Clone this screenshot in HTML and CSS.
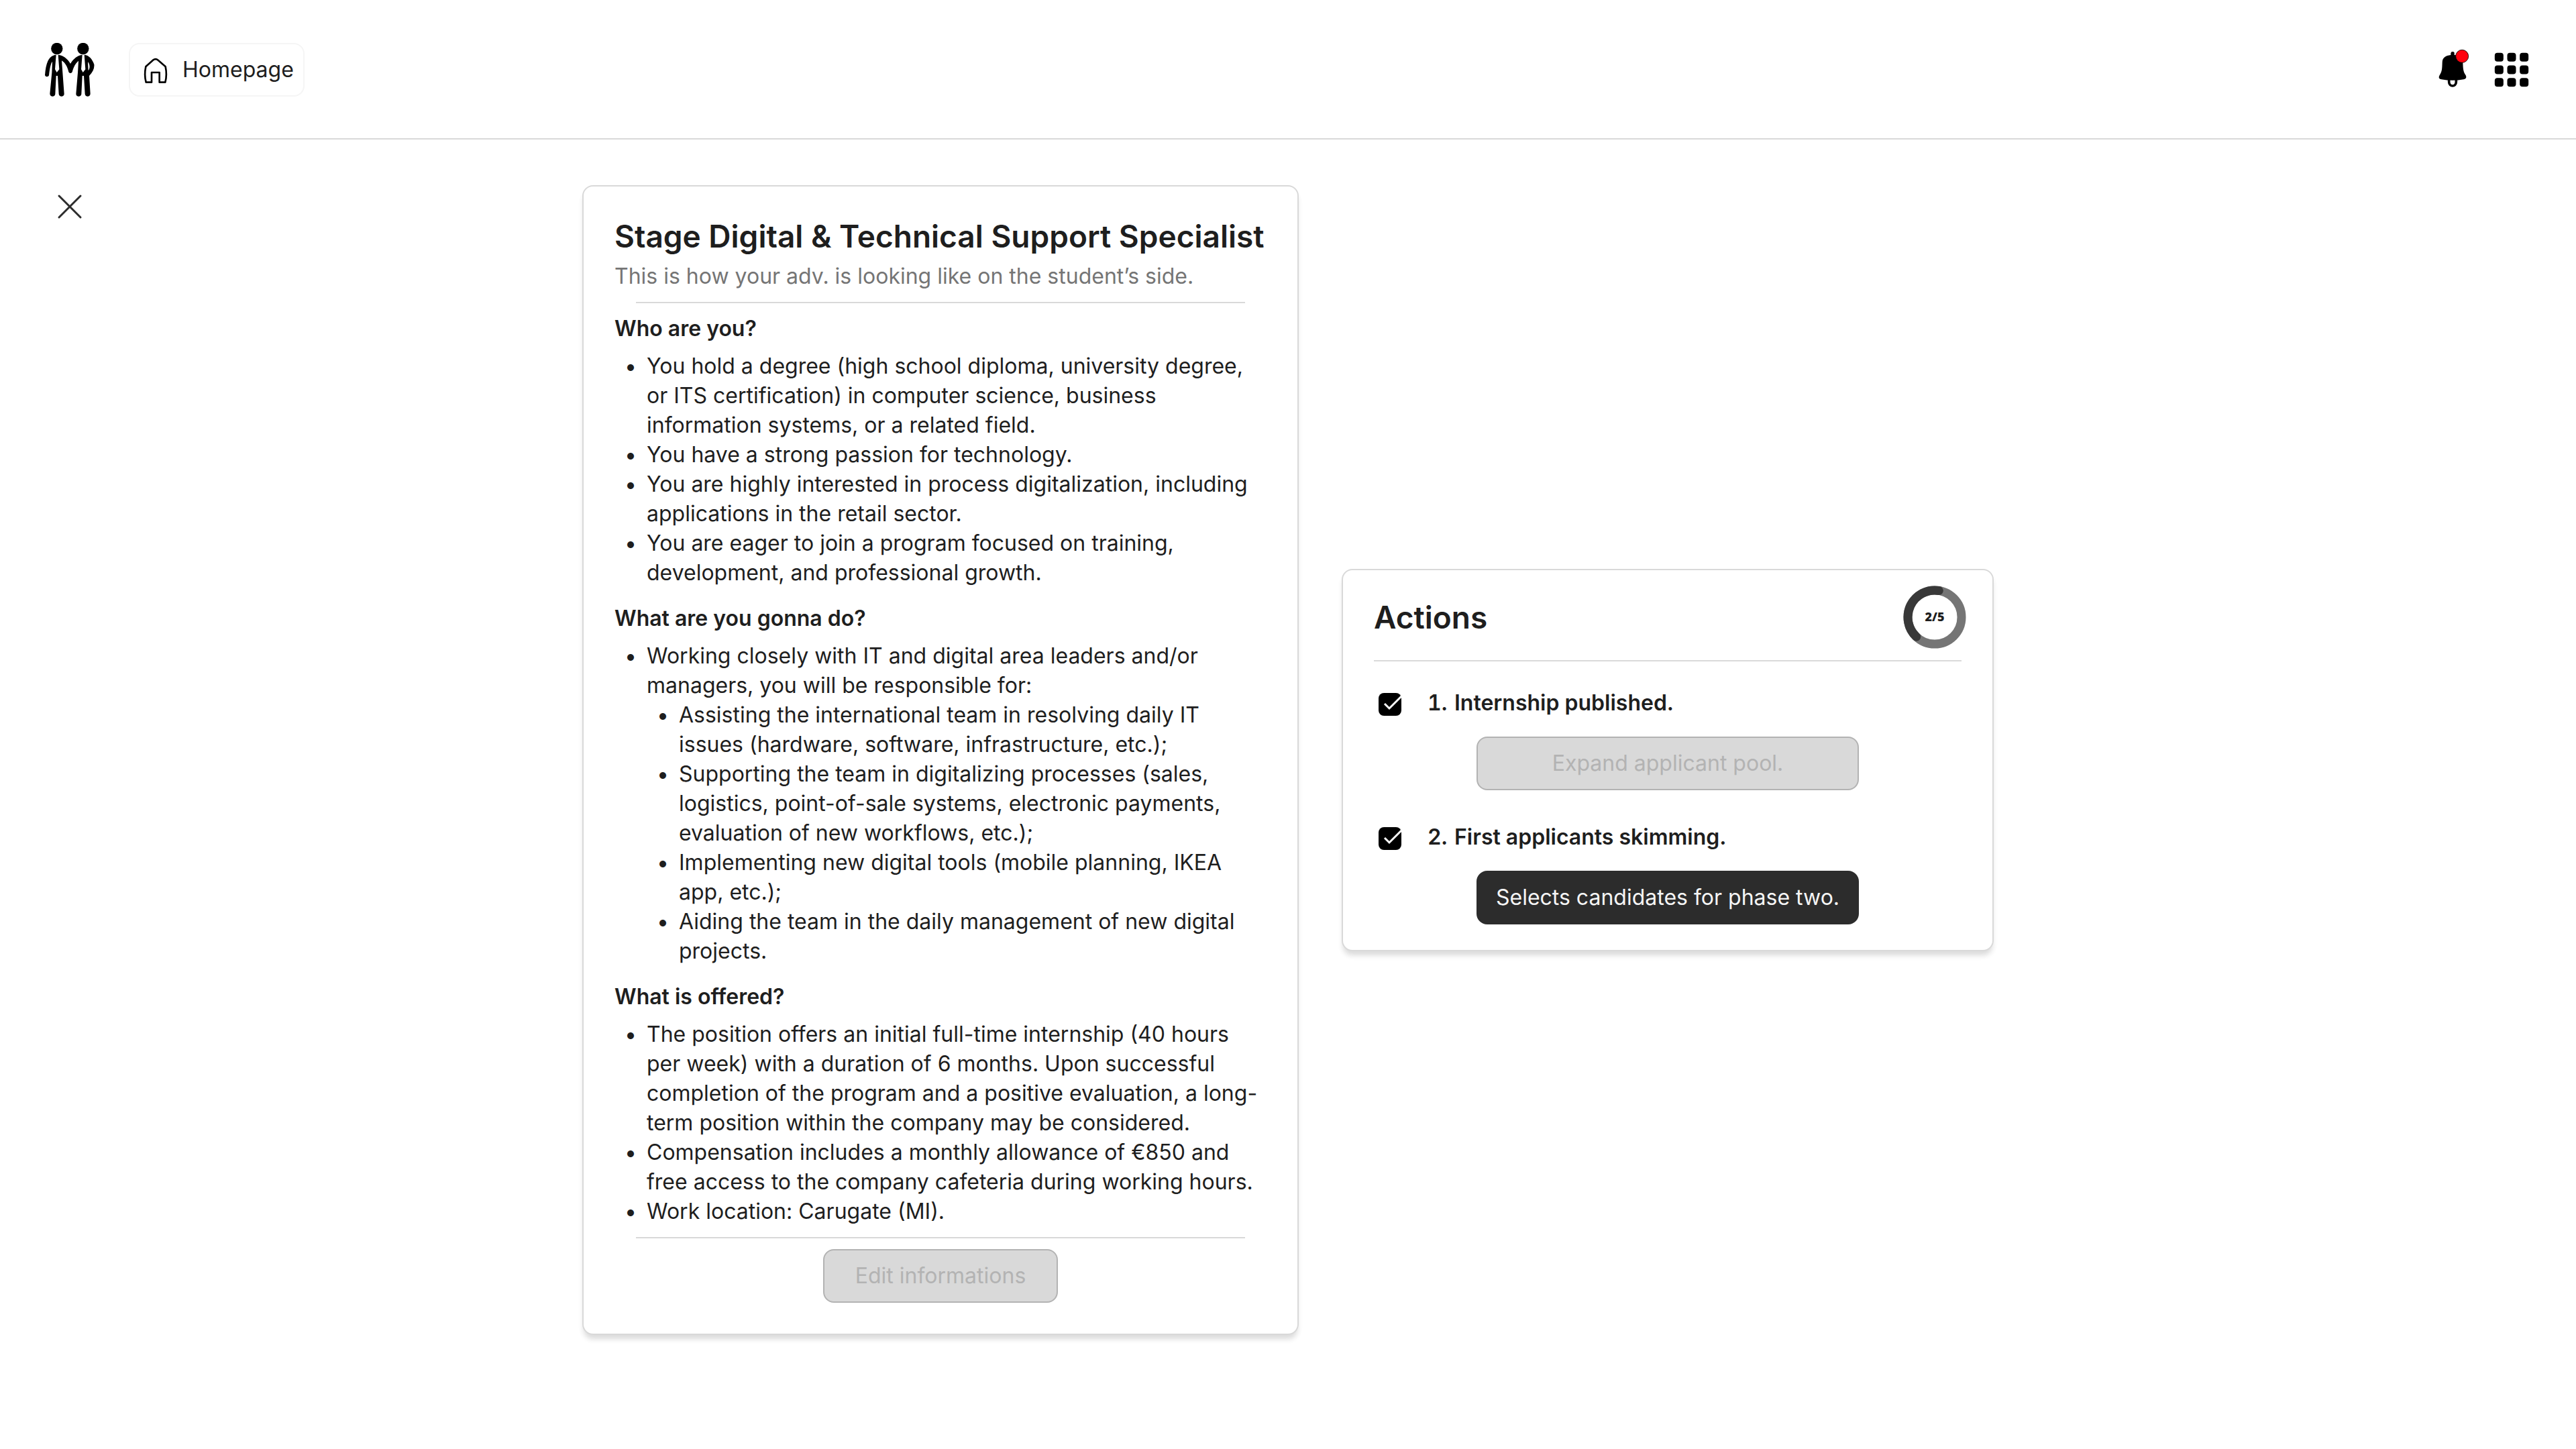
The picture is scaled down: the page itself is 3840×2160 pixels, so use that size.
FILE: index.html
```html
<!DOCTYPE html>
<html lang="en">
<head>
  <meta charset="utf-8">
  <meta name="viewport" content="width=device-width, initial-scale=1">
  <title>Stage Digital &amp; Technical Support Specialist</title>
  <link rel="stylesheet" href="styles.css">
</head>
<body>
  <header class="topbar">
    <a class="logo" href="#" aria-label="Home">
      <svg viewBox="72 72 240 240" aria-hidden="true">
        <circle cx="134.500" cy="97.500" r="26"/>
        <circle cx="251.500" cy="97.500" r="26"/>
        <path d="M131 125 L126 190 L134 204 L145 190 L140 125 C162 127 182 142 195 165 C208 142 228 127 248 125 L243 190 L251 204 L262 190 L257 125 C278 127 292 143 301 168 C303 186 295 203 279 219 L284 299 C284 315 261 315 260 301 L255 219 L248 219 L244 301 C243 315 220 315 220 300 L228 205 L231 152 C218 163 210 177 203 202 C200 209 190 209 187 202 C181 178 173 162 156 151 L160 205 L167 300 C167 315 144 315 143 301 L138 219 L131 219 L127 301 C126 315 103 315 103 299 L112 205 L114 155 C106 165 102 190 99 217 C97 225 83 225 81 216 C83 190 87 168 94 153 C103 136 113 127 131 125 Z M273 157 L275 196 C283 186 283 168 273 157 Z" fill-rule="evenodd"/>
      </svg>
    </a>
    <a class="home-link" href="#">
      <svg class="home-icon" viewBox="504 120 144 144" aria-hidden="true">
        <path d="M558 248 V204 H593 V248 H619 C625 226 625 202 620 178 L587 149 Q576 140 564 149 L532 178 C527 202 527 226 533 248 Z"/>
      </svg>
      <span>Homepage</span>
    </a>
    <div class="topbar-actions">
      <button class="icon-button" type="button" aria-label="Notifications">
        <svg viewBox="132 96 192 192" aria-hidden="true">
          <path d="M220 126 V118 Q221 111 228 111 Q236 111 236 118 V126 C260 128 274 137 274 160 C275 190 276 201 287 217 C292 228 287 233 278 235 Q228 244 178 235 C169 233 164 228 169 218 C181 201 181 190 182 160 C182 138 197 128 220 126 Z"/>
          <path d="M212 236 V246 C212 270 244 270 244 246 V236" fill="none" stroke="#000" stroke-width="11"/>
          <circle cx="270.500" cy="131.500" r="28.500" fill="#ff000d" stroke="#000" stroke-width="2.500"/>
        </svg>
      </button>
      <button class="icon-button" type="button" aria-label="Menu">
        <svg viewBox="396 96 192 192" aria-hidden="true">
          <rect x="416.500" y="116.500" width="39" height="39" rx="12"/>
          <rect x="472.500" y="116.500" width="39" height="39" rx="12"/>
          <rect x="528.500" y="116.500" width="39" height="39" rx="12"/>
          <rect x="416.500" y="172.500" width="39" height="39" rx="12"/>
          <rect x="472.500" y="172.500" width="39" height="39" rx="12"/>
          <rect x="528.500" y="172.500" width="39" height="39" rx="12"/>
          <rect x="416.500" y="228.500" width="39" height="39" rx="12"/>
          <rect x="472.500" y="228.500" width="39" height="39" rx="12"/>
          <rect x="528.500" y="228.500" width="39" height="39" rx="12"/>
        </svg>
      </button>
    </div>
  </header>

  <main class="page">
    <button class="close-button" type="button" aria-label="Close">
      <svg viewBox="0 0 80 80" aria-hidden="true"><path d="M24 24 L56 56 M56 24 L24 56"/></svg>
    </button>

    <div class="cards">
      <article class="card advert">
        <div class="advert-head">
          <h1 class="title">Stage Digital &amp; Technical Support Specialist</h1>
          <p class="subtitle">This is how your adv. is looking like on the student’s side.</p>
        </div>
        <hr class="divider divider-inset">
        <div class="sections">
          <section class="section">
            <h2 class="section-title">Who are you?</h2>
            <ul class="bullets">
              <li>You hold a degree (high school diploma, university degree, or ITS certification) in computer science, business information systems, or a related field.</li>
              <li>You have a strong passion for technology.</li>
              <li>You are highly interested in process digitalization, including applications in the retail sector.</li>
              <li>You are eager to join a program focused on training, development, and professional growth.</li>
            </ul>
          </section>
          <section class="section">
            <h2 class="section-title">What are you gonna do?</h2>
            <ul class="bullets">
              <li>Working closely with IT and digital area leaders and/or managers, you will be responsible for:
                <ul class="bullets">
                  <li>Assisting the international team in resolving daily IT issues (hardware, software, infrastructure, etc.);</li>
                  <li>Supporting the team in digitalizing processes (sales, logistics, point-of-sale systems, electronic payments, evaluation of new workflows, etc.);</li>
                  <li>Implementing new digital tools (mobile planning, IKEA app, etc.);</li>
                  <li>Aiding the team in the daily management of new digital projects.</li>
                </ul>
              </li>
            </ul>
          </section>
          <section class="section">
            <h2 class="section-title">What is offered?</h2>
            <ul class="bullets">
              <li>The position offers an initial full-time internship (40 hours per week) with a duration of 6 months. Upon successful completion of the program and a positive evaluation, a long-term position within the company may be considered.</li>
              <li>Compensation includes a monthly allowance of €850 and free access to the company cafeteria during working hours.</li>
              <li>Work location: Carugate (MI).</li>
            </ul>
          </section>
        </div>
        <hr class="divider divider-inset">
        <button class="button button-disabled" type="button" disabled>Edit informations</button>
      </article>

      <section class="card actions">
        <div class="actions-head">
          <h2 class="title">Actions</h2>
          <svg class="progress" viewBox="0 0 96 96" role="img" aria-label="2 of 5 done">
            <circle cx="48" cy="48" r="40" stroke="#757575"/>
            <path d="M20.700 77.200 A40 40 0 0 1 54.300 8.500" stroke="#383838" stroke-linecap="round"/>
            <text x="48" y="54">2/5</text>
          </svg>
        </div>
        <hr class="divider">
        <ol class="steps">
          <li class="step">
            <label class="step-label">
              <span class="tick">
                <input type="checkbox" checked>
                <svg viewBox="0 0 48 48" aria-hidden="true"><path d="M16 23 L23 30 L41 12"/></svg>
              </span>
              <span class="step-text"><span class="step-number">1.</span><span>Internship published.</span></span>
            </label>
            <button class="button button-wide button-disabled" type="button" disabled>Expand applicant pool.</button>
          </li>
          <li class="step">
            <label class="step-label">
              <span class="tick">
                <input type="checkbox" checked>
                <svg viewBox="0 0 48 48" aria-hidden="true"><path d="M16 23 L23 30 L41 12"/></svg>
              </span>
              <span class="step-text"><span class="step-number">2.</span><span>First applicants skimming.</span></span>
            </label>
            <button class="button button-wide" type="button">Selects candidates for phase two.</button>
          </li>
        </ol>
      </section>
    </div>
  </main>
</body>
</html>
```
FILE: styles.css
```css
* {
  box-sizing: border-box;
}

body {
  margin: 0;
  background: #fff;
  color: #1e1e1e;
  font: 400 32px/44px Inter, "Liberation Sans", sans-serif;
}

h1, h2, p, ul, ol {
  margin: 0;
  padding: 0;
}

button {
  font: inherit;
  cursor: pointer;
}

svg {
  display: block;
}

/* Top bar */
.topbar {
  display: flex;
  align-items: center;
  gap: 48px;
  padding: 64px 64px 62px;
  border-bottom: 2px solid #d9d9d9;
}

.logo,
.logo svg {
  display: block;
  width: 80px;
  height: 80px;
}

.home-link {
  display: flex;
  align-items: center;
  gap: 16px;
  height: 80px;
  padding: 0 14px;
  border: 2px solid #f5f5f5;
  border-radius: 16px;
  color: inherit;
  text-decoration: none;
}

.home-icon {
  width: 48px;
  height: 48px;
  fill: none;
  stroke: #000;
  stroke-width: 8;
  stroke-linejoin: round;
}

.topbar-actions {
  display: flex;
  gap: 24px;
  margin-left: auto;
}

.icon-button,
.close-button {
  padding: 0;
  border: 0;
  background: none;
}

.icon-button svg {
  width: 64px;
  height: 64px;
}

/* Page */
.page {
  display: grid;
  grid-template-columns: 1fr auto 1fr;
  align-items: start;
  padding: 60px 64px;
}

.close-button {
  justify-self: start;
}

.close-button svg {
  width: 80px;
  height: 80px;
  fill: none;
  stroke: #2c2c2c;
  stroke-width: 3;
  stroke-linecap: round;
}

.cards {
  display: flex;
  align-items: center;
  gap: 64px;
  padding-top: 8px;
}

.card {
  display: flex;
  flex-direction: column;
  gap: 16px;
  border: 2px solid #d9d9d9;
  border-radius: 16px;
  background: #fff;
  box-shadow: 0 8px 8px -2px #0c0c0d1a, 0 8px 8px -2px #0c0c0d0d;
}

.title {
  font-size: 46px;
  line-height: 60px;
  font-weight: 600;
}

.divider {
  align-self: stretch;
  height: 2px;
  margin: 0;
  border: 0;
  background: #d9d9d9;
}

.divider-inset {
  margin: 0 32px;
}

/* Advert */
.advert {
  max-width: 1068px;
  padding: 44px 46px 46px;
}

.advert-head {
  display: flex;
  flex-direction: column;
  gap: 8px;
}

.subtitle {
  color: #757575;
}

.sections {
  display: flex;
  flex-direction: column;
  gap: 24px;
}

.section {
  display: flex;
  flex-direction: column;
  gap: 12px;
}

.section-title {
  font-size: 32px;
  line-height: 44px;
  font-weight: 600;
}

.bullets {
  padding-left: 48px;
  list-style: none;
}

.bullets li {
  position: relative;
}

.bullets li::before {
  content: "•";
  position: absolute;
  left: -48px;
  width: 48px;
  text-align: center;
}

.button {
  align-self: center;
  height: 80px;
  padding: 0 46px;
  border: 2px solid #2c2c2c;
  border-radius: 16px;
  background: #2c2c2c;
  color: #f5f5f5;
}

.button-wide {
  width: 570px;
  padding: 0;
}

.button-disabled {
  border-color: #b3b3b3;
  background: #d9d9d9;
  color: #b3b3b3;
  cursor: default;
}

/* Actions */
.actions {
  width: 972px;
  padding: 22px 46px 38px;
}

.actions-head {
  display: flex;
  align-items: center;
  justify-content: space-between;
}

.progress {
  width: 96px;
  height: 96px;
  margin-right: -8px;
  fill: none;
  stroke-width: 13;
}

.progress text {
  fill: #1e1e1e;
  font: 800 18px "Open Sans", sans-serif;
  text-anchor: middle;
}

.steps {
  display: flex;
  flex-direction: column;
  gap: 48px;
  padding-top: 24px;
  list-style: none;
}

.step {
  display: flex;
  flex-direction: column;
  gap: 24px;
}

.step-label {
  display: flex;
  gap: 32px;
  height: 48px;
  font-weight: 600;
}

.step-text {
  display: flex;
  gap: 8px;
}

.step-number {
  width: 32px;
  font-variant-numeric: tabular-nums;
}

.tick {
  display: grid;
  width: 48px;
  height: 48px;
  place-items: center;
}

.tick input,
.tick svg {
  grid-area: 1 / 1;
}

.tick input {
  appearance: none;
  width: 34px;
  height: 34px;
  margin: 0;
  border-radius: 8px;
  background: #000;
}

.tick svg {
  width: 48px;
  height: 48px;
  fill: none;
  stroke: #fff;
  stroke-width: 3;
  pointer-events: none;
}
```
